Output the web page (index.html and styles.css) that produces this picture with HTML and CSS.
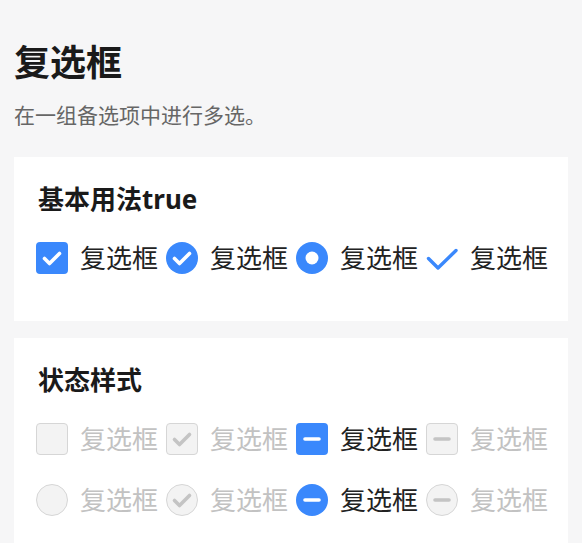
FILE: index.html
```html
<!DOCTYPE html>
<html lang="zh-CN">
<head>
    <meta charset="UTF-8">
    <meta name="viewport" content="width=device-width, initial-scale=1.0">
    <title>复选框</title>
    <link rel="stylesheet" href="styles.css">
</head>
<body>
    <div class="page">
        <h1 class="title">复选框</h1>
        <p class="desc">在一组备选项中进行多选。</p>

        <section class="card">
            <h2>基本用法true</h2>
            <div class="row">
                <label class="item">
                    <span class="icon square on">
                        <svg viewBox="0 0 32 32"><path d="M8.5 16.5l5 5 10-10" /></svg>
                    </span>
                    <span class="text">复选框</span>
                </label>
                <label class="item">
                    <span class="icon circle on">
                        <svg viewBox="0 0 32 32"><path d="M8.5 16.5l5 5 10-10" /></svg>
                    </span>
                    <span class="text">复选框</span>
                </label>
                <label class="item">
                    <span class="icon circle on">
                        <svg viewBox="0 0 32 32"><circle cx="16" cy="16" r="6.5" class="dot" /></svg>
                    </span>
                    <span class="text">复选框</span>
                </label>
                <label class="item">
                    <span class="icon bare">
                        <svg viewBox="0 0 32 32"><path d="M2.5 16.5l9.5 9.5 18-17.5" /></svg>
                    </span>
                    <span class="text">复选框</span>
                </label>
            </div>
        </section>

        <section class="card">
            <h2>状态样式</h2>
            <div class="row">
                <label class="item disabled">
                    <span class="icon square off"></span>
                    <span class="text">复选框</span>
                </label>
                <label class="item disabled">
                    <span class="icon square off">
                        <svg viewBox="0 0 32 32"><path d="M8.5 16.5l5 5 10-10" /></svg>
                    </span>
                    <span class="text">复选框</span>
                </label>
                <label class="item">
                    <span class="icon square on">
                        <svg viewBox="0 0 32 32"><path d="M9 16h14" /></svg>
                    </span>
                    <span class="text">复选框</span>
                </label>
                <label class="item disabled">
                    <span class="icon square off">
                        <svg viewBox="0 0 32 32"><path d="M9 16h14" /></svg>
                    </span>
                    <span class="text">复选框</span>
                </label>
            </div>
            <div class="row">
                <label class="item disabled">
                    <span class="icon circle off"></span>
                    <span class="text">复选框</span>
                </label>
                <label class="item disabled">
                    <span class="icon circle off">
                        <svg viewBox="0 0 32 32"><path d="M8.5 16.5l5 5 10-10" /></svg>
                    </span>
                    <span class="text">复选框</span>
                </label>
                <label class="item">
                    <span class="icon circle on">
                        <svg viewBox="0 0 32 32"><path d="M9 16h14" /></svg>
                    </span>
                    <span class="text">复选框</span>
                </label>
                <label class="item disabled">
                    <span class="icon circle off">
                        <svg viewBox="0 0 32 32"><path d="M9 16h14" /></svg>
                    </span>
                    <span class="text">复选框</span>
                </label>
            </div>
        </section>
    </div>
</body>
</html>
```

FILE: styles.css
```css
body {
    margin: 0;
    padding: 0;
    background-color: #f6f6f7;
    color: #333;
    font-family: "Noto Sans", "Noto Sans CJK SC", sans-serif;
}
.page {
    padding: 38px 14px 0;
}
.title {
    margin: 0 0 12px;
    font-size: 36px;
    line-height: 50px;
    font-weight: bold;
    color: #1a1a1a;
}
.desc {
    margin: 0 0 27px;
    font-size: 21px;
    line-height: 30px;
    color: #666;
}
.card {
    background: #fff;
    padding: 24px 22px 42px;
    margin-bottom: 17px;
}
.card h2 {
    margin: 0 0 20px;
    padding-left: 2px;
    font-size: 26px;
    line-height: 36px;
    font-weight: bold;
    color: #1a1a1a;
}
.row {
    display: flex;
    align-items: center;
    height: 42px;
    margin-bottom: 19px;
}
.row:last-child {
    margin-bottom: 0;
}
.item {
    display: flex;
    align-items: center;
    flex-shrink: 0;
    margin-right: 8px;
    white-space: nowrap;
}
.item:last-child {
    margin-right: 0;
}
.icon {
    width: 32px;
    height: 32px;
    flex-shrink: 0;
    box-sizing: border-box;
    display: flex;
    align-items: center;
    justify-content: center;
}
.icon svg {
    width: 32px;
    height: 32px;
    fill: none;
    stroke-width: 3.6;
    stroke-linecap: round;
    stroke-linejoin: round;
}
.square {
    border-radius: 4px;
}
.circle {
    border-radius: 50%;
}
.on {
    background-color: #3a88fc;
}
.on svg {
    stroke: #fff;
}
.on .dot {
    fill: #fff;
    stroke: none;
}
.off {
    background-color: #f3f3f3;
    border: 1px solid #d6d6d6;
}
.off svg {
    stroke: #c4c4c4;
    margin: -1px;
}
.bare svg {
    stroke: #3a88fc;
    stroke-width: 3.4;
}
.text {
    margin-left: 12px;
    font-size: 26px;
    line-height: 36px;
    color: #222;
}
.disabled .text {
    color: #c2c2c2;
}
```
